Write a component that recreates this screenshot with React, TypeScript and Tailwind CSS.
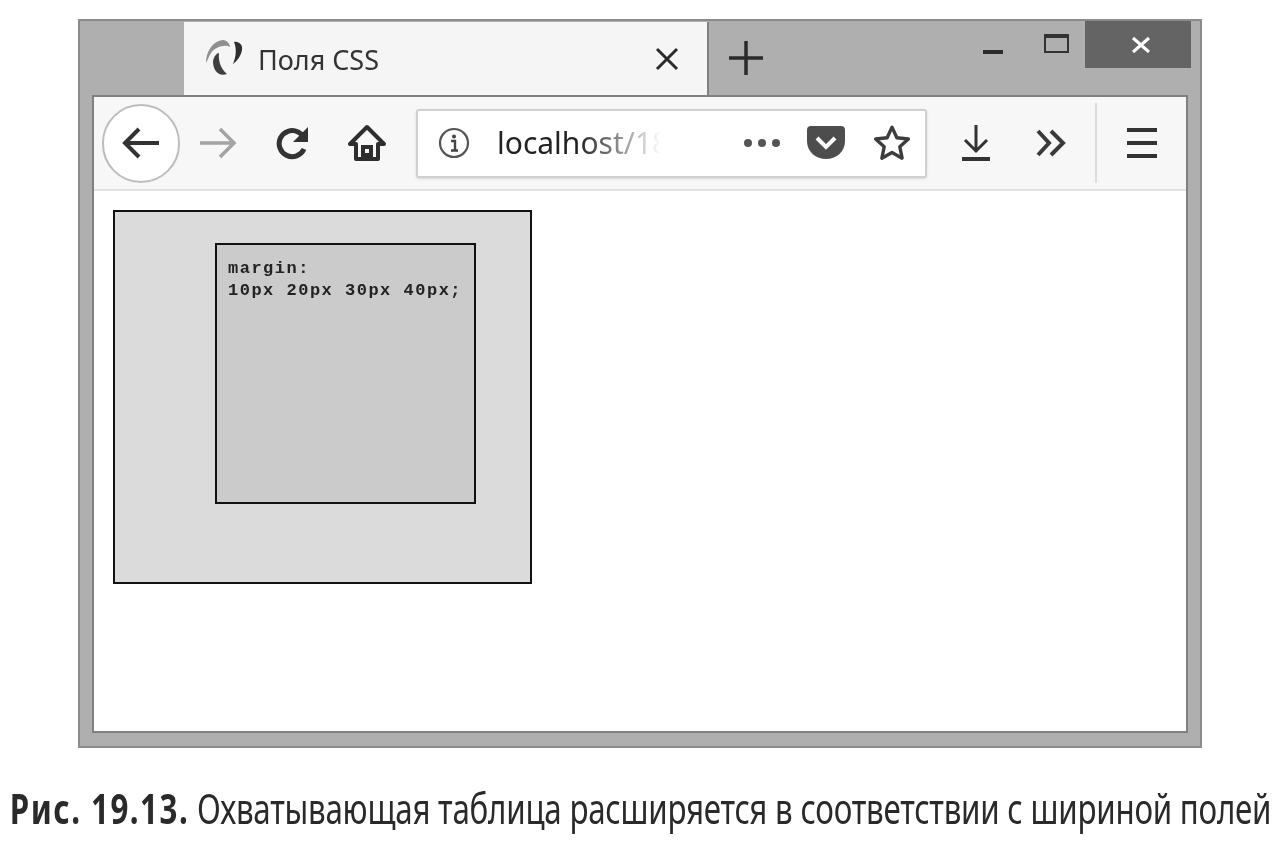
export default function App() {
  return (
    <div className="w-[1286px] h-[852px] bg-white overflow-hidden pt-[19px] blur-[0.5px]">
      <div className="ml-[78px] w-[1124px] h-[729px] bg-[#afafaf] border-2 border-[#8c8c8c] flex flex-col">
        {/* tab strip */}
        <div className="h-[74px] flex shrink-0">
          <div className="ml-[104px] mt-px w-[525px] h-[73px] bg-[#f5f5f5] border-r-2 border-[#808080] flex items-center pl-[21px]">
            <svg width="38" height="38" viewBox="0 0 38 38" className="shrink-0 mt-[-2px]">
              <path d="M1 24C1 12 8 2 18 1C22 1 25 5 25 8C20 5 10 8 6 14C4 17 3 20 1 24Z" fill="#8f8f8f" />
              <path d="M8 22C9 17 12 14 14 14C13 22 16 30 22 35C14 38 8 32 8 22Z" fill="#3f3f3f" />
              <path d="M29 3C34 2 38 6 37 11C36 17 32 22 28 25C31 18 32 10 29 3Z" fill="#2f2f2f" />
            </svg>
            <span className="ml-[15px] font-['Noto_Sans',sans-serif] text-[27px] leading-none text-[#333] mt-[2px] whitespace-nowrap">
              Поля CSS
            </span>
            <svg width="26" height="26" viewBox="0 0 26 26" className="ml-auto mr-[27px] shrink-0">
              <path d="M3 3L23 23M23 3L3 23" stroke="#2b2b2b" strokeWidth="3" />
            </svg>
          </div>
          <svg width="36" height="36" viewBox="0 0 36 36" className="ml-[19px] mt-[19px] shrink-0">
            <path d="M18 1V35M1 18H35" stroke="#2b2b2b" strokeWidth="3.5" />
          </svg>
          <div className="ml-auto flex items-start">
            <div className="w-[20px] h-[4px] bg-[#2b2b2b] mt-[29px]" />
            <div className="ml-[41px] mt-[13px] w-[25px] h-[19px] border-2 border-t-[4px] border-[#333]" />
            <div className="ml-[16px] mr-[9px] w-[106px] h-[47px] bg-[#646464] flex items-center justify-center pl-[6px]">
              <svg width="20" height="20" viewBox="0 0 20 20">
                <path d="M2 3L18 17M18 3L2 17" stroke="#fff" strokeWidth="3" />
              </svg>
            </div>
          </div>
        </div>

        {/* browser body */}
        <div className="mx-3 h-[638px] border-2 border-[#808080] bg-white flex flex-col">
          <div className="h-[94px] shrink-0 bg-[#f7f7f7] border-b-2 border-[#e2e2e2] flex items-center">
            <div className="ml-[8px] w-[78px] h-[79px] rounded-full bg-white border-2 border-[#bdbdbd] flex items-center justify-center shrink-0">
              <svg width="38" height="34" viewBox="0 0 38 34">
                <path d="M37 17H3M17 3L3 17L17 31" fill="none" stroke="#333" strokeWidth="4" />
              </svg>
            </div>
            <svg width="38" height="34" viewBox="0 0 38 34" className="ml-[19px] shrink-0">
              <path d="M1 17H35M21 3L35 17L21 31" fill="none" stroke="#a3a3a3" strokeWidth="3.5" />
            </svg>
            <svg width="36" height="34" viewBox="0 0 36 34" className="ml-[36px] shrink-0">
              <path d="M31 23A13 13 0 1 1 25 6L31 10" fill="none" stroke="#333" strokeWidth="5" />
              <path d="M35 1V16H20Z" fill="#333" />
            </svg>
            <svg width="38" height="38" viewBox="0 0 38 38" className="ml-[39px] shrink-0">
              <path d="M19 3L2 20H8V35H30V20H36Z" fill="none" stroke="#2e2e2e" strokeWidth="4" strokeLinejoin="round" />
              <path d="M15 35V23H23V35" fill="none" stroke="#2e2e2e" strokeWidth="4" />
              <path d="M17 29H21V33H17Z" fill="#2e2e2e" />
            </svg>
            <div className="ml-[30px] w-[511px] h-[69px] rounded-[3px] bg-white border-2 border-[#d0d0d0] shadow-sm flex items-center shrink-0">
              <svg width="32" height="32" viewBox="0 0 32 32" className="ml-[20px] shrink-0">
                <circle cx="16" cy="16" r="14" fill="none" stroke="#555" strokeWidth="2.2" />
                <circle cx="16" cy="9.5" r="2" fill="#444" />
                <path d="M13 14H17V23M13 23.5H20" fill="none" stroke="#444" strokeWidth="2.4" />
              </svg>
              <span className="ml-[27px] w-[164px] overflow-hidden whitespace-nowrap font-['Noto_Sans',sans-serif] text-[30px] leading-[36px] bg-[linear-gradient(90deg,#222_50%,#ffffff_100%)] bg-clip-text text-transparent">
                localhost/18
              </span>
              <div className="ml-[83px] flex gap-[6px] shrink-0">
                <div className="w-[8px] h-[8px] rounded-full bg-[#555]" />
                <div className="w-[8px] h-[8px] rounded-full bg-[#555]" />
                <div className="w-[8px] h-[8px] rounded-full bg-[#555]" />
              </div>
              <svg width="38" height="34" viewBox="0 0 38 34" className="ml-[27px] shrink-0">
                <path d="M4 0H34Q38 0 38 4V15C38 26 29 33 19 33C9 33 0 26 0 15V4Q0 0 4 0Z" fill="#4d4d4d" />
                <path d="M10 12L19 21L28 12" fill="none" stroke="#fff" strokeWidth="4" />
              </svg>
              <svg width="40" height="38" viewBox="0 0 36 36" className="ml-[27px] shrink-0">
                <path d="M18 3L22.6 13L33.5 14.2L25.4 21.6L27.6 32.4L18 27L8.4 32.4L10.6 21.6L2.5 14.2L13.4 13Z" fill="none" stroke="#3d3d3d" strokeWidth="3.2" strokeLinejoin="round" />
              </svg>
            </div>
            <svg width="30" height="38" viewBox="0 0 30 38" className="ml-[34px] shrink-0">
              <path d="M15 1V27M4 16L15 27L26 16" fill="none" stroke="#333" strokeWidth="3" />
              <path d="M1 35H29" stroke="#333" strokeWidth="4" />
            </svg>
            <svg width="32" height="30" viewBox="0 0 32 30" className="ml-[44px] shrink-0">
              <path d="M3 3L14 15L3 27M16 3L28 15L16 27" fill="none" stroke="#3a3a3a" strokeWidth="4" />
            </svg>
            <div className="ml-[28px] w-[2px] h-[80px] bg-[#dcdcdc] shrink-0" />
            <div className="ml-[30px] w-[30px] flex flex-col gap-[9px] shrink-0">
              <div className="h-[4px] bg-[#333]" />
              <div className="h-[4px] bg-[#333]" />
              <div className="h-[4px] bg-[#333]" />
            </div>
          </div>

          <div className="pt-[19px] pl-[19px]">
            <div className="w-[419px] h-[374px] border-2 border-[#111] bg-[#dbdbdb] pt-[31px] pl-[100px]">
              <div className="w-[261px] h-[261px] border-2 border-[#111] bg-[#cbcbcb] pt-[13px] pl-[11px] font-['Liberation_Mono',monospace] font-bold text-[17px] leading-[22px] tracking-[1.5px] text-[#222] whitespace-nowrap">
                <div>margin:</div>
                <div>10px 20px 30px 40px;</div>
              </div>
            </div>
          </div>
        </div>
      </div>

      <div className="mt-[32px] pl-[13px] w-max whitespace-nowrap origin-left scale-x-[0.745] font-['Noto_Sans',sans-serif] text-[42px] leading-[56px] tracking-[-0.31px] text-[#2a2a2a]">
        <span className="font-bold tracking-[2px]">Рис. 19.13.</span> Охватывающая таблица расширяется в соответствии с шириной полей
      </div>
    </div>
  );
}
